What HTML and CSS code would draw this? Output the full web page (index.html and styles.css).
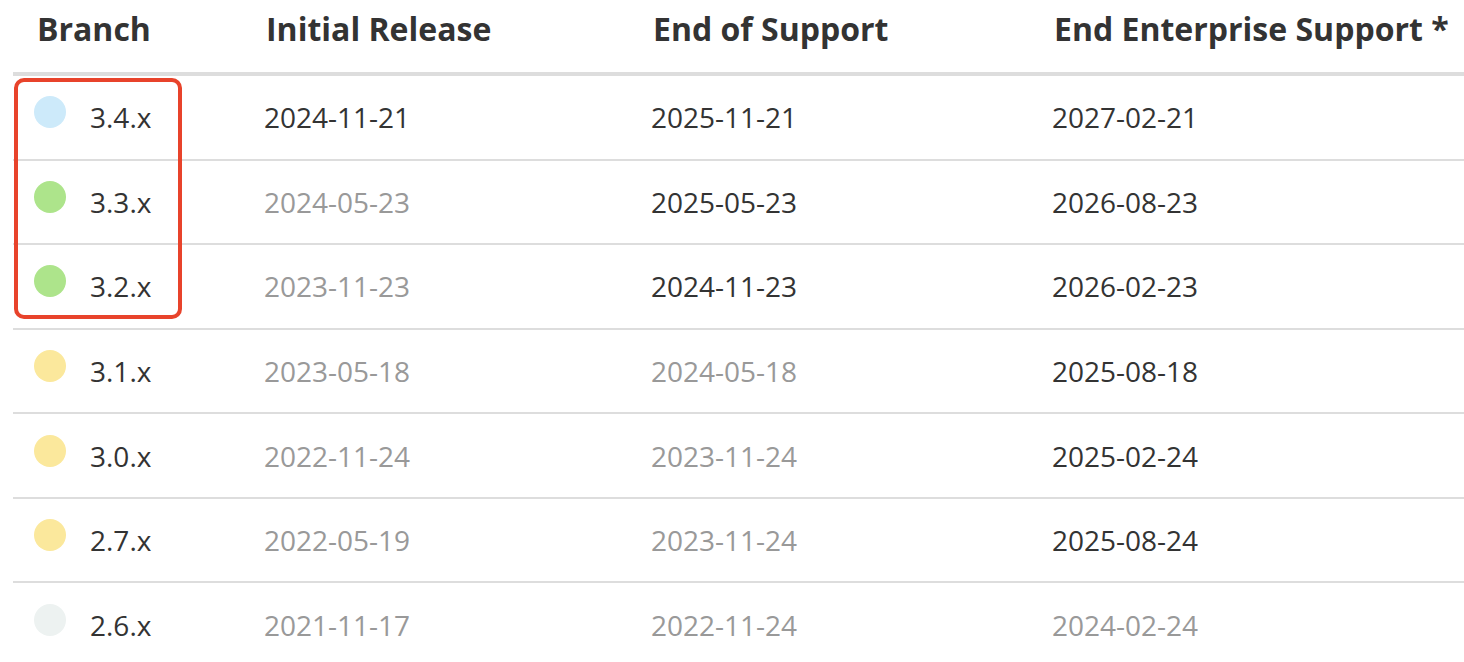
FILE: index.html
```html
<!DOCTYPE html>
<html lang="en">
<head>
<meta charset="utf-8">
<title>Branches</title>
<link rel="stylesheet" href="styles.css">
</head>
<body>
<table class="releases">
  <colgroup>
    <col class="c1"><col class="c2"><col class="c3"><col class="c4">
  </colgroup>
  <thead>
    <tr>
      <th class="first">Branch</th>
      <th>Initial Release</th>
      <th>End of Support</th>
      <th>End Enterprise Support *</th>
    </tr>
  </thead>
  <tbody>
    <tr>
      <td class="branch"><span class="hl-box"></span><span class="dot dot-blue"></span>3.4.x</td>
      <td>2024-11-21</td>
      <td>2025-11-21</td>
      <td>2027-02-21</td>
    </tr>
    <tr>
      <td class="branch"><span class="dot dot-green"></span>3.3.x</td>
      <td class="muted">2024-05-23</td>
      <td>2025-05-23</td>
      <td>2026-08-23</td>
    </tr>
    <tr>
      <td class="branch"><span class="dot dot-green"></span>3.2.x</td>
      <td class="muted">2023-11-23</td>
      <td>2024-11-23</td>
      <td>2026-02-23</td>
    </tr>
    <tr>
      <td class="branch"><span class="dot dot-yellow"></span>3.1.x</td>
      <td class="muted">2023-05-18</td>
      <td class="muted">2024-05-18</td>
      <td>2025-08-18</td>
    </tr>
    <tr>
      <td class="branch"><span class="dot dot-yellow"></span>3.0.x</td>
      <td class="muted">2022-11-24</td>
      <td class="muted">2023-11-24</td>
      <td>2025-02-24</td>
    </tr>
    <tr>
      <td class="branch"><span class="dot dot-yellow"></span>2.7.x</td>
      <td class="muted">2022-05-19</td>
      <td class="muted">2023-11-24</td>
      <td>2025-08-24</td>
    </tr>
    <tr>
      <td class="branch"><span class="dot dot-grey"></span>2.6.x</td>
      <td class="muted">2021-11-17</td>
      <td class="muted">2022-11-24</td>
      <td class="muted">2024-02-24</td>
    </tr>
  </tbody>
</table>
</body>
</html>
```
FILE: styles.css
```css
html, body {
  margin: 0;
  padding: 0;
  background: #fff;
}
body {
  font-family: "Open Sans", "Noto Sans", sans-serif;
  color: #333;
  overflow: hidden;
}
.releases {
  margin-left: 13px;
  width: 1451px;
  border-collapse: collapse;
  table-layout: fixed;
}
.c1 { width: 230px; }
.c2 { width: 387px; }
.c3 { width: 401px; }
.c4 { width: 433px; }
.releases th {
  text-align: left;
  font-weight: 700;
  font-size: 32px;
  line-height: 44px;
  padding: 7px 0 21px 23px;
  border-bottom: 4px solid #ddd;
  white-space: nowrap;
  color: #333;
}
.releases th.first {
  padding-left: 24px;
}
.releases td {
  font-size: 28px;
  line-height: 38px;
  padding: 22.2px 0 22.4px 21px;
  border-bottom: 2px solid #ddd;
  white-space: nowrap;
  color: #333;
}
.releases tbody tr:last-child td {
  border-bottom: none;
}
.releases td.muted {
  color: #999;
}
.branch {
  position: relative;
}
.dot {
  display: inline-block;
  width: 32px;
  height: 32px;
  border-radius: 50%;
  margin: -2px 24px 0 0;
  vertical-align: baseline;
}
.dot-blue { background: #cdeafa; }
.dot-green { background: #ade48b; }
.dot-yellow { background: #fbe89c; }
.dot-grey { background: #edf2f1; }
.hl-box {
  position: absolute;
  left: 1px;
  top: 2px;
  width: 168px;
  height: 241px;
  box-sizing: border-box;
  border: 4px solid #e8432b;
  border-radius: 10px;
  pointer-events: none;
}
```
